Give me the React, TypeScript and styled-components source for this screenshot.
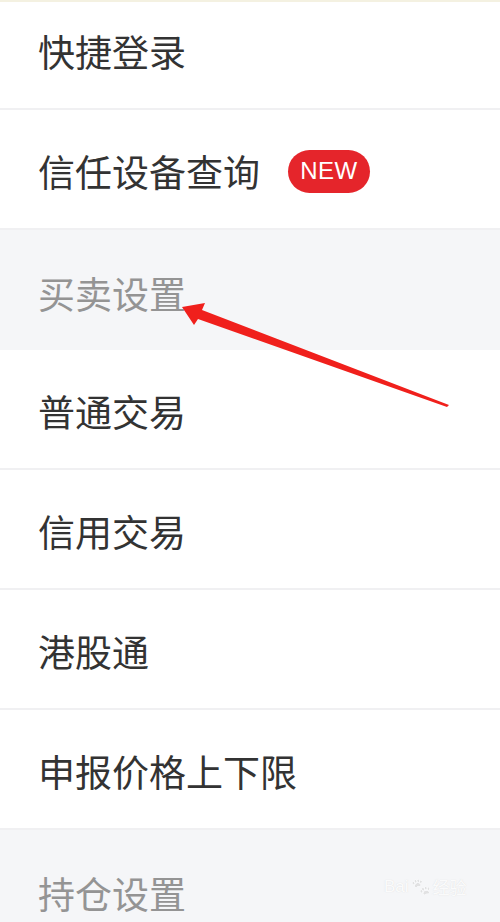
import { FC } from 'react';
import styled, { createGlobalStyle } from 'styled-components';

const GlobalStyle = createGlobalStyle`
  html, body {
    margin: 0;
    padding: 0;
    background: #ffffff;
  }
  body {
    font-family: 'Noto Sans CJK SC', 'Noto Sans', sans-serif;
  }
`;

interface IItem {
  label: string;
  isNew?: boolean;
}

interface ISection {
  title?: string;
  items: IItem[];
}

const sections: ISection[] = [
  {
    items: [{ label: '快捷登录' }, { label: '信任设备查询', isNew: true }]
  },
  {
    title: '买卖设置',
    items: [
      { label: '普通交易' },
      { label: '信用交易' },
      { label: '港股通' },
      { label: '申报价格上下限' }
    ]
  },
  {
    title: '持仓设置',
    items: []
  }
];

const App: FC = () => {
  return (
    <>
      <GlobalStyle />
      <Page>
        {sections.map((section, i) => (
          <div key={i}>
            {section.title && <SectionHeader>{section.title}</SectionHeader>}
            {section.items.map((item, idx) => (
              <Row key={item.label} $first={i === 0 && idx === 0}>
                <Label>{item.label}</Label>
                {item.isNew && <NewBadge>NEW</NewBadge>}
              </Row>
            ))}
          </div>
        ))}
        <Arrow viewBox="0 0 500 922" aria-hidden>
          <polygon
            points="182,307 205,303 202,310 449,405 447,407 198,319 194,325"
            fill="#f0201c"
          />
        </Arrow>
        <Watermark>
          <span>Bai</span>
          <Paw>🐾</Paw>
          <span>经验</span>
        </Watermark>
      </Page>
    </>
  );
};

const Page = styled.div`
  position: relative;
  width: 500px;
  height: 922px;
  overflow: hidden;
  background: #f5f6f8;
  border-top: 2px solid #f4f1e1;
  box-sizing: border-box;
`;

const Row = styled.div<{ $first?: boolean }>`
  display: flex;
  align-items: center;
  gap: 26px;
  height: ${(p) => (p.$first ? 108 : 120)}px;
  padding: 0 38px;
  padding-bottom: ${(p) => (p.$first ? 8 : 0)}px;
  padding-top: ${(p) => (p.$first ? 0 : 4)}px;
  box-sizing: border-box;
  background: #ffffff;
  border-bottom: 2px solid #f0f0f2;
`;

const Label = styled.span`
  font-size: 37px;
  line-height: 1;
  color: #333333;
`;

const NewBadge = styled.span`
  display: inline-flex;
  align-items: center;
  justify-content: center;
  width: 82px;
  height: 43px;
  margin-left: 2px;
  border-radius: 22px;
  background: #e5252b;
  color: #ffffff;
  font-family: 'Liberation Sans', 'Noto Sans', sans-serif;
  font-size: 24px;
  letter-spacing: 0.5px;
`;

const SectionHeader = styled.div`
  display: flex;
  align-items: center;
  height: 120px;
  padding: 6px 38px 0;
  box-sizing: border-box;
  font-size: 37px;
  line-height: 1;
  color: #949494;
  background: #f5f6f8;
`;

const Arrow = styled.svg`
  position: absolute;
  top: -2px;
  left: 0;
  width: 500px;
  height: 922px;
  pointer-events: none;
`;

const Watermark = styled.div`
  position: absolute;
  left: 384px;
  top: 872px;
  display: flex;
  align-items: center;
  gap: 2px;
  font-family: 'Liberation Sans', 'Noto Sans CJK SC', sans-serif;
  font-size: 17px;
  color: rgba(255, 255, 255, 0.9);
  text-shadow: 0 0 1px rgba(200, 200, 200, 0.6);
`;

const Paw = styled.span`
  font-size: 16px;
  opacity: 0.5;
  filter: grayscale(1) brightness(2);
`;

export default App;
